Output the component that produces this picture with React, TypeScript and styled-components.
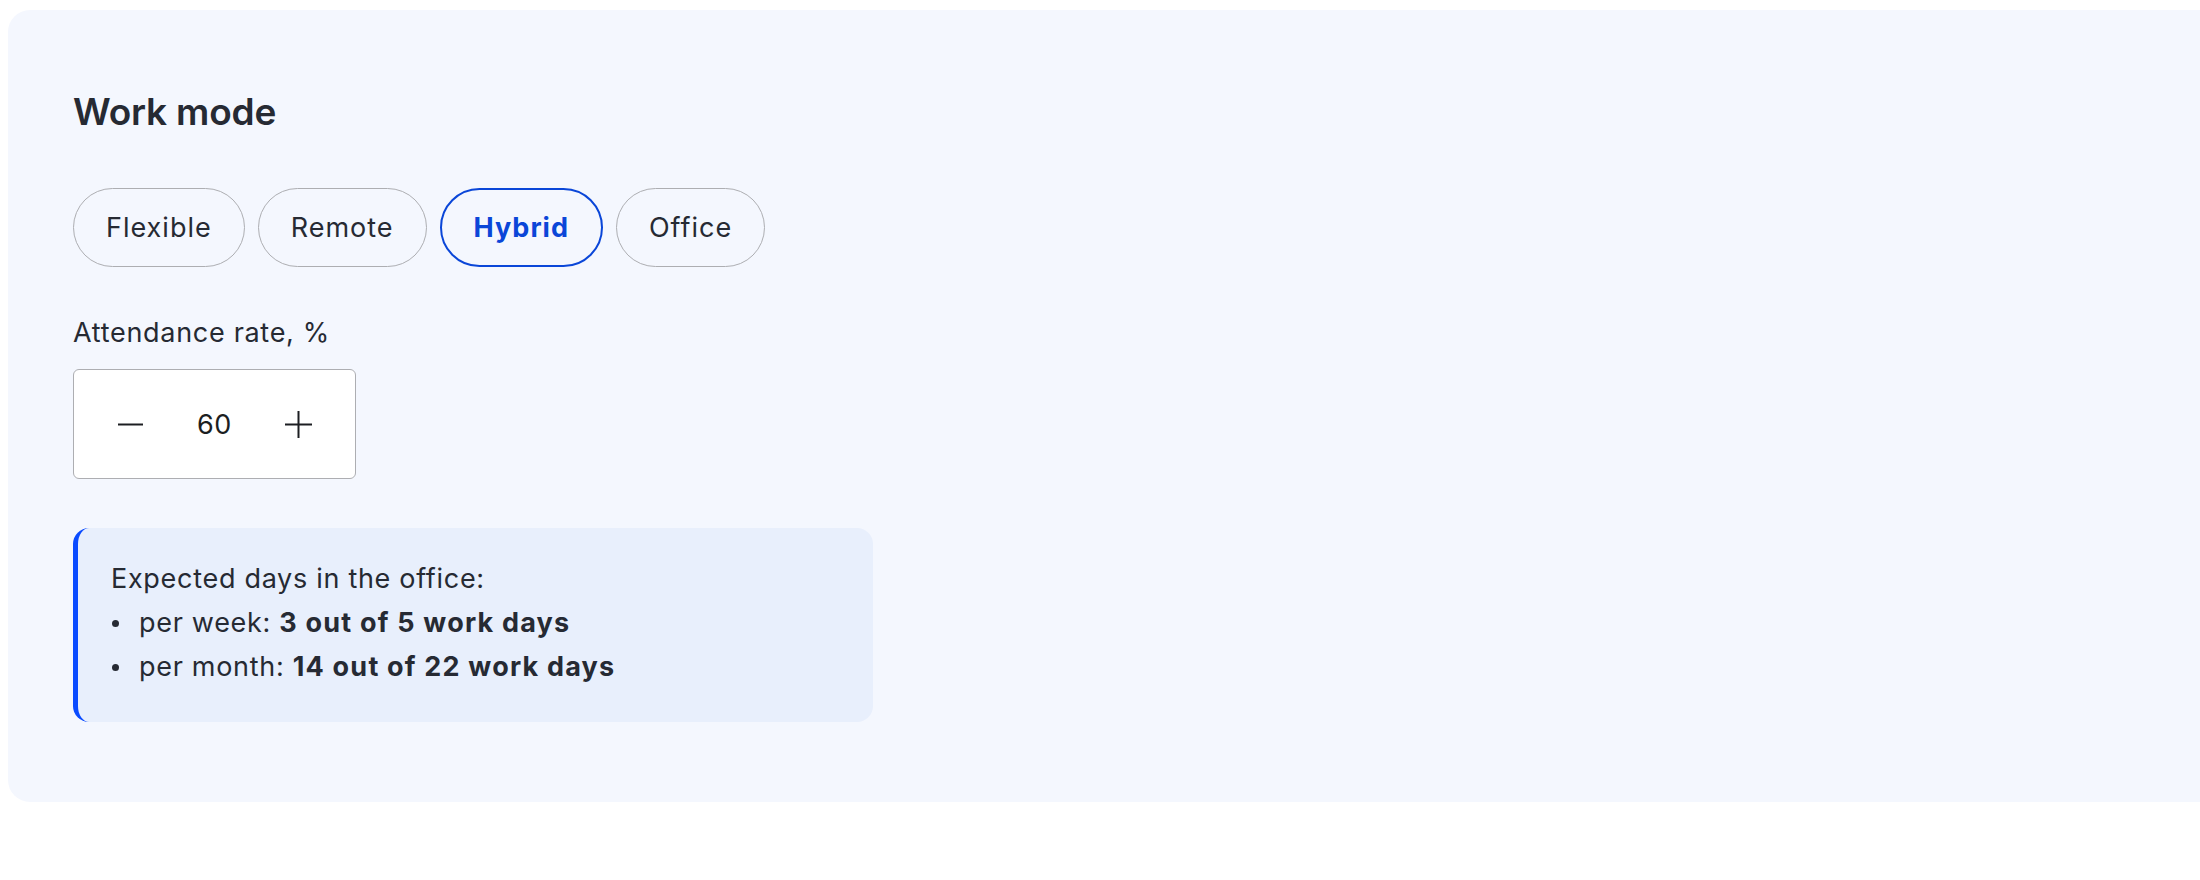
import React, { useState } from 'react';
import styled, { createGlobalStyle } from 'styled-components';

const GlobalStyle = createGlobalStyle`
  html, body {
    margin: 0;
    padding: 0;
    background: #ffffff;
    overflow: hidden;
  }

  body {
    font-family: Inter, 'Noto Sans', sans-serif;
    color: #262a33;
  }
`;

const Page = styled.div`
  padding: 10px 0 0 8px;
`;

const Card = styled.section`
  box-sizing: border-box;
  width: calc(100% + 40px);
  padding: 80px 65px 80px;
  background: #f4f7fe;
  border-radius: 22px;
`;

const Title = styled.h2`
  margin: 0 0 54px;
  font-size: 37px;
  line-height: 44px;
  font-weight: 600;
  letter-spacing: -0.2px;
`;

const PillRow = styled.div`
  display: flex;
  gap: 13px;
  margin-bottom: 48px;
`;

const Pill = styled.button<{ $active?: boolean }>`
  display: inline-flex;
  align-items: center;
  justify-content: center;
  box-sizing: border-box;
  height: 79px;
  padding: 0 32px;
  border-radius: 40px;
  background: transparent;
  border: ${(p) => (p.$active ? '2px solid #0a46d8' : '1.5px solid #adaeb2')};
  color: ${(p) => (p.$active ? '#0a46d8' : '#262a33')};
  font-family: inherit;
  font-size: 27px;
  font-weight: ${(p) => (p.$active ? 700 : 400)};
  letter-spacing: 1px;
  cursor: pointer;
`;

const Label = styled.div`
  font-size: 27px;
  line-height: 36px;
  letter-spacing: 0.7px;
  margin-bottom: 18px;
`;

const Stepper = styled.div`
  display: flex;
  align-items: center;
  justify-content: center;
  gap: 53px;
  box-sizing: border-box;
  width: 283px;
  height: 110px;
  background: #ffffff;
  border: 1.5px solid #adaeb2;
  border-radius: 6px;
  margin-bottom: 49px;
`;

const StepButton = styled.button`
  display: flex;
  align-items: center;
  justify-content: center;
  width: 27px;
  height: 27px;
  padding: 0;
  border: 0;
  background: none;
  color: #1c1e22;
  cursor: pointer;
`;

const Value = styled.span`
  font-size: 27px;
  letter-spacing: 0.5px;
  color: #1c1e22;
  min-width: 35px;
  text-align: center;
`;

const Info = styled.div`
  box-sizing: border-box;
  width: 800px;
  padding: 29px 30px 33px 33px;
  background: #e8effc;
  border-left: 5px solid #0a4bff;
  border-radius: 16px;
  font-size: 27px;
  line-height: 44px;
  letter-spacing: 0.7px;
`;

const List = styled.ul`
  margin: 0;
  padding: 0;
  list-style: none;

  li {
    position: relative;
    padding-left: 28px;
  }

  li::before {
    content: '';
    position: absolute;
    left: 1px;
    top: 19px;
    width: 7px;
    height: 7px;
    border-radius: 50%;
    background: #262a33;
  }

  b {
    font-weight: 700;
    letter-spacing: 1.2px;
  }
`;

const modes = ['Flexible', 'Remote', 'Hybrid', 'Office'];

const Minus = () => (
  <svg width="27" height="27" viewBox="0 0 27 27" fill="none">
    <path d="M1 13.5h25" stroke="currentColor" strokeWidth="2" />
  </svg>
);

const Plus = () => (
  <svg width="27" height="27" viewBox="0 0 27 27" fill="none">
    <path d="M0 13.5h27M13.5 0v27" stroke="currentColor" strokeWidth="2" />
  </svg>
);

const App = () => {
  const [mode, setMode] = useState('Hybrid');
  const [rate, setRate] = useState(60);

  // days are rounded up, so 60% of 22 gives 14
  const perWeek = Math.ceil((rate / 100) * 5);
  const perMonth = Math.ceil((rate / 100) * 22);

  return (
    <Page>
      <GlobalStyle />
      <Card>
        <Title>Work mode</Title>
        <PillRow>
          {modes.map((m) => (
            <Pill key={m} $active={m === mode} onClick={() => setMode(m)}>
              {m}
            </Pill>
          ))}
        </PillRow>
        <Label>Attendance rate, %</Label>
        <Stepper>
          <StepButton aria-label="decrease" onClick={() => setRate((r) => Math.max(0, r - 10))}>
            <Minus />
          </StepButton>
          <Value>{rate}</Value>
          <StepButton aria-label="increase" onClick={() => setRate((r) => Math.min(100, r + 10))}>
            <Plus />
          </StepButton>
        </Stepper>
        <Info>
          <div>Expected days in the office:</div>
          <List>
            <li>
              per week: <b>{perWeek} out of 5 work days</b>
            </li>
            <li>
              per month: <b>{perMonth} out of 22 work days</b>
            </li>
          </List>
        </Info>
      </Card>
    </Page>
  );
};

export default App;
